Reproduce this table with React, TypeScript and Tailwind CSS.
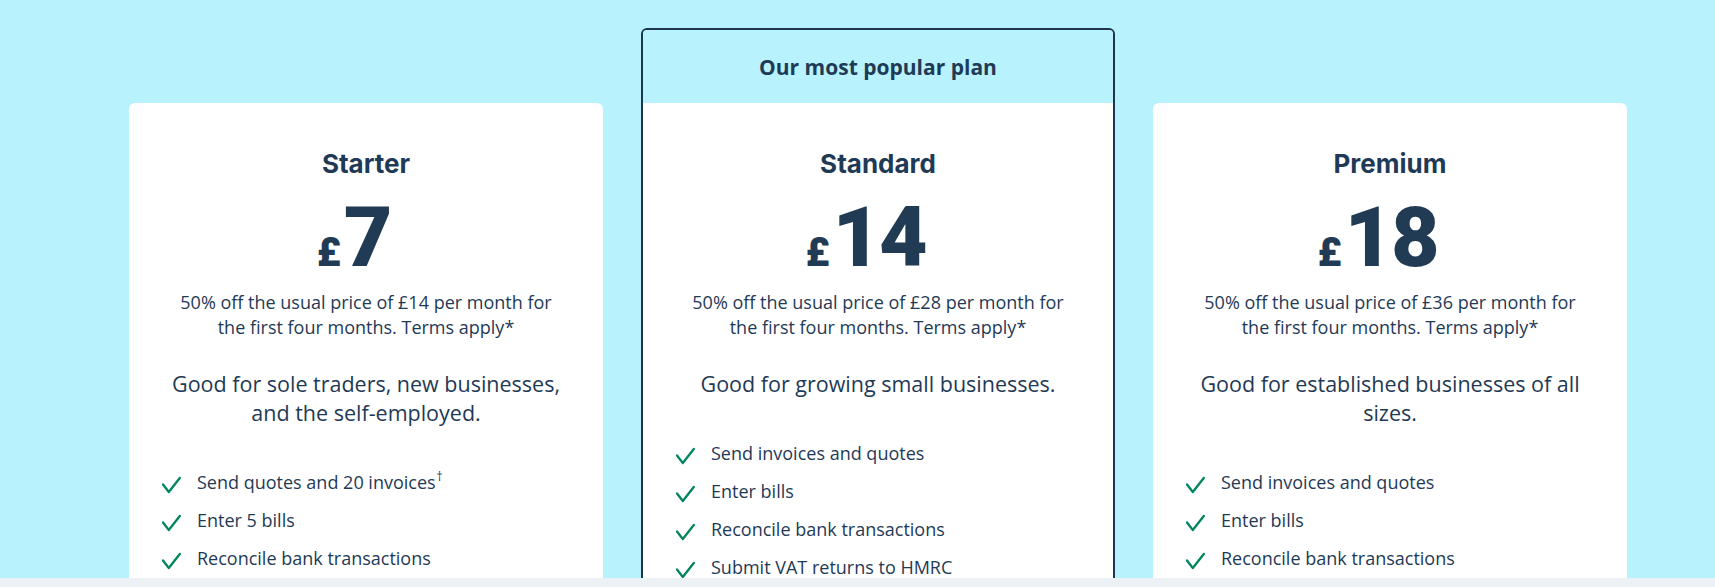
import { ReactNode } from "react"

interface Plan {
  name: string
  price: string
  usual: string
  tagline: string
  features: ReactNode[]
  popular?: boolean
}

const plans: Plan[] = [
  {
    name: "Starter",
    price: "7",
    usual: "£14",
    tagline: "Good for sole traders, new businesses, and the self-employed.",
    features: [
      <>Send quotes and 20 invoices<span className="align-top text-[12px] leading-[16px] ml-[1px]">†</span></>,
      "Enter 5 bills",
      "Reconcile bank transactions",
    ],
  },
  {
    name: "Standard",
    price: "14",
    usual: "£28",
    tagline: "Good for growing small businesses.",
    popular: true,
    features: [
      "Send invoices and quotes",
      "Enter bills",
      "Reconcile bank transactions",
      "Submit VAT returns to HMRC",
    ],
  },
  {
    name: "Premium",
    price: "18",
    usual: "£36",
    tagline: "Good for established businesses of all sizes.",
    features: [
      "Send invoices and quotes",
      "Enter bills",
      "Reconcile bank transactions",
    ],
  },
]

const Check = () => (
  <svg width="19" height="18" viewBox="0 0 19 18" fill="none" className="shrink-0 mt-[7px]">
    <path d="M1 8.5 L6.8 16 L17.8 2" stroke="#00855f" strokeWidth="2.3" strokeLinecap="round" strokeLinejoin="round" />
  </svg>
)

const PlanBody = ({ plan }: { plan: Plan }) => {
  return (
    <div className="bg-white px-[33px] pt-[45px] pb-10">
      <h3 className="text-center text-[26px] leading-8 font-bold text-[#1f3a56] font-['Inter',sans-serif]">
        {plan.name}
      </h3>

      {/* Price */}
      <div className="flex items-baseline justify-center mt-[18px] pr-[25px] text-[#213b55] font-['Roboto',sans-serif]">
        <span className="text-[40px] leading-none font-black mr-[3px]">£</span>
        <span className="text-[84px] leading-[80px] font-black tracking-tight">{plan.price}</span>
      </div>

      <p className="mx-auto mt-[12px] max-w-[392px] text-center text-[18px] leading-[25px] text-[#1f3a56]">
        50% off the usual price of {plan.usual} per month for the first four months. Terms apply*
      </p>

      <p className="mx-auto mt-[29px] max-w-[396px] text-center text-[21.5px] leading-[29px] text-[#1f3a56]">
        {plan.tagline}
      </p>

      <ul className="mt-[42px] flex flex-col gap-[12px]">
        {plan.features.map((f, i) => (
          <li key={i} className="flex items-start gap-[16px] text-[18px] leading-[26px] text-[#1f3a56]">
            <Check />
            <span>{f}</span>
          </li>
        ))}
      </ul>
    </div>
  )
}

export default function App() {
  return (
    <div className="w-[1715px] h-[587px] overflow-hidden font-['Open_Sans',sans-serif]">
      <section className="h-[578px] overflow-hidden bg-[#b8f2fc] pt-[28px] pl-[129px]">
        <div className="flex items-start gap-[38px]">
          {plans.map((plan) =>
            plan.popular ? (
              <div key={plan.name} className="w-[474px] rounded-[6px] border-2 border-[#1e3450] overflow-hidden">
                <div className="h-[73px] pt-[3px] flex items-center justify-center bg-[#b8f2fc] text-[21px] font-bold text-[#1f3a56]">
                  Our most popular plan
                </div>
                <PlanBody plan={plan} />
              </div>
            ) : (
              <div key={plan.name} className="w-[474px] mt-[75px] rounded-[6px] overflow-hidden">
                <PlanBody plan={plan} />
              </div>
            )
          )}
        </div>
      </section>
      <div className="h-[9px] bg-[#ecf1f5]" />
    </div>
  )
}
